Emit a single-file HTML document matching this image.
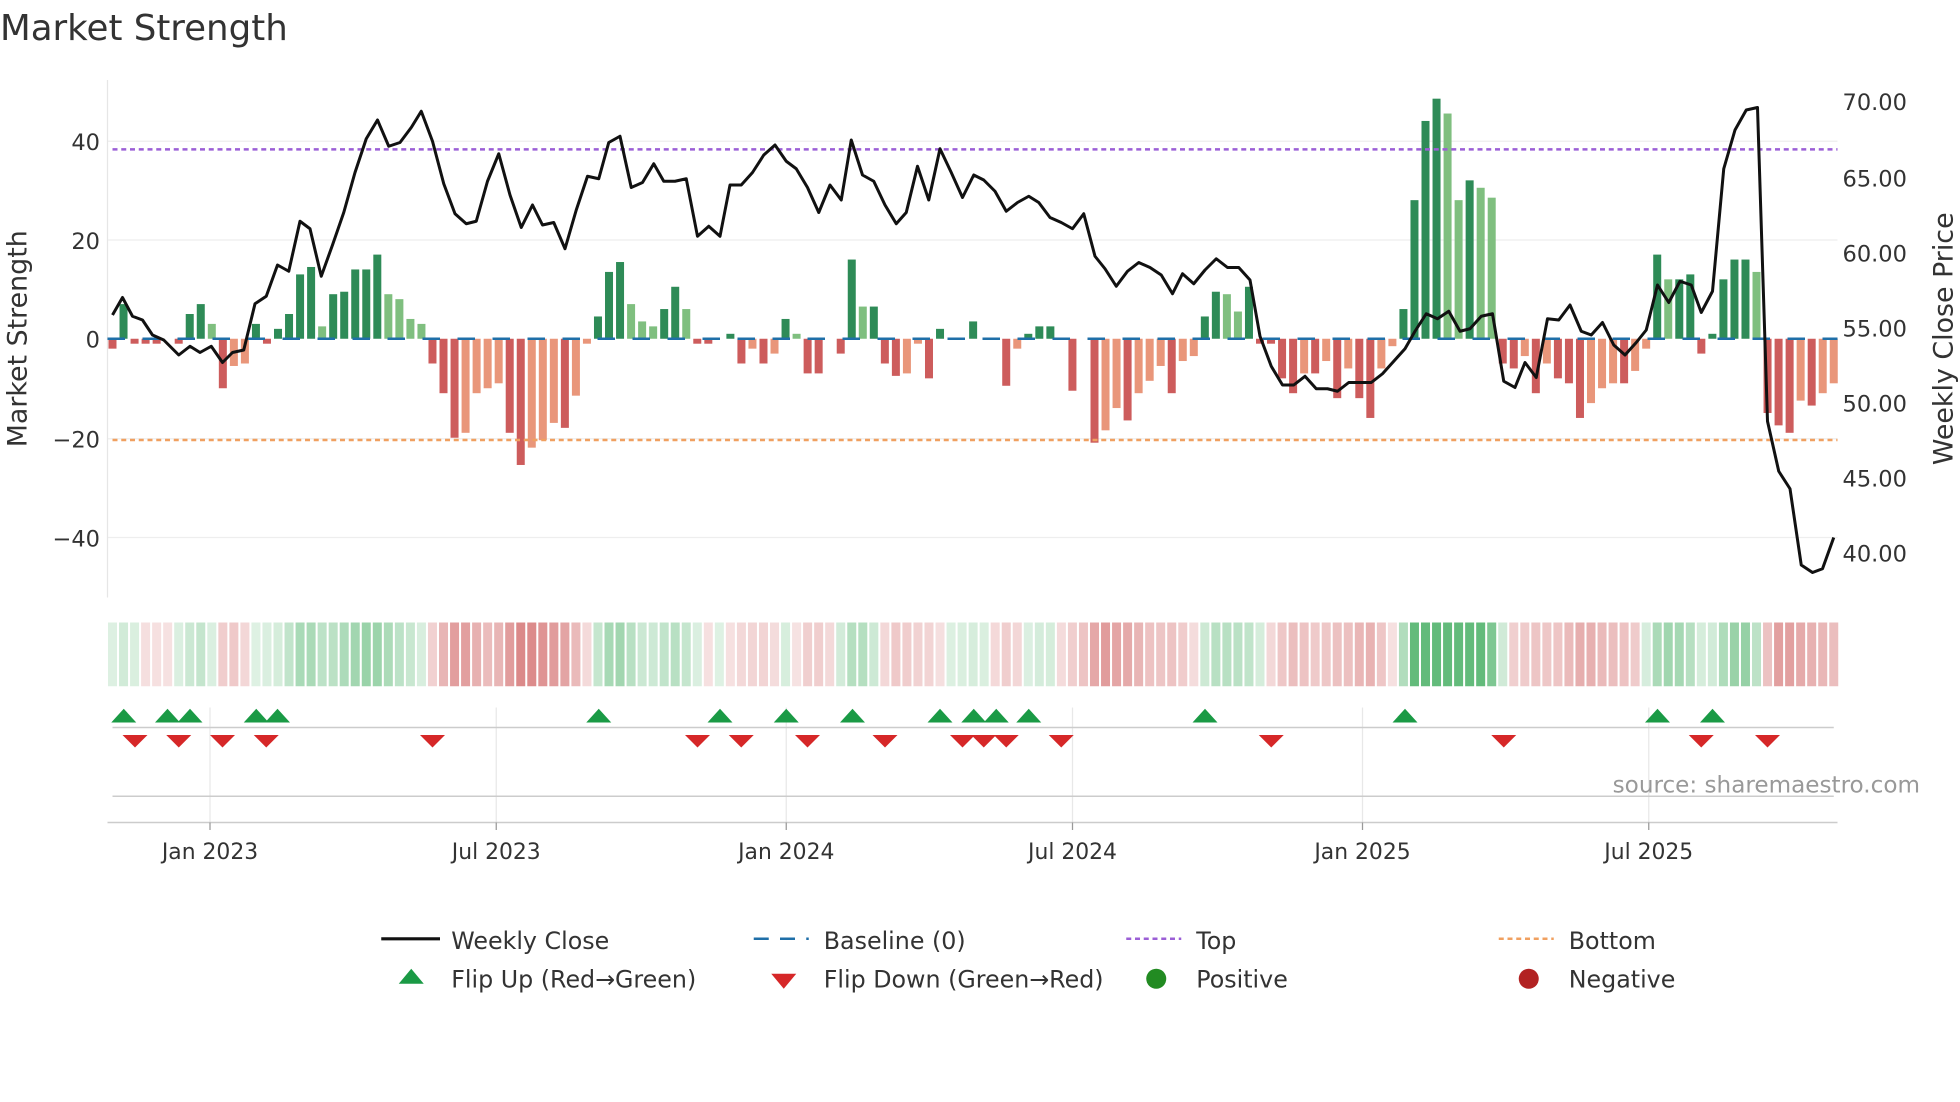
<!DOCTYPE html>
<html><head><meta charset="utf-8"><style>
html,body{margin:0;padding:0;background:#fff;width:1960px;height:1102px;overflow:hidden}
svg{display:block;font-family:"DejaVu Sans","Liberation Sans",sans-serif}
</style></head><body>
<svg id="s" width="1960" height="1102" viewBox="0 0 1568 881.6" xmlns="http://www.w3.org/2000/svg">
<text x="0" y="32" font-size="28.5" fill="#333">Market Strength</text>
<g stroke="#eee" stroke-width="1">
<line x1="86" y1="113" x2="1470" y2="113"/><line x1="86" y1="192" x2="1470" y2="192"/>
<line x1="86" y1="351" x2="1470" y2="351"/><line x1="86" y1="430" x2="1470" y2="430"/>
</g>
<line x1="86" y1="64" x2="86" y2="478" stroke="#e6e6e6"/>
<g id="bars"></g>
<line x1="86" y1="271" x2="1470" y2="271" stroke="#1f6fa8" stroke-width="2" stroke-dasharray="14,14"/>
<line x1="90" y1="119.5" x2="1470" y2="119.5" stroke="#9b5fd6" stroke-width="2" stroke-dasharray="4,3"/>
<line x1="90" y1="352" x2="1470" y2="352" stroke="#f0a060" stroke-width="2" stroke-dasharray="4,3"/>
<polyline id="price" fill="none" stroke="#111" stroke-width="2.4" stroke-linejoin="round"/>
<g font-size="18" fill="#333">
<text x="80" y="120" text-anchor="end">40</text><text x="80" y="199" text-anchor="end">20</text>
<text x="80" y="278" text-anchor="end">0</text><text x="80" y="358" text-anchor="end">−20</text>
<text x="80" y="437" text-anchor="end">−40</text>
<text x="1474" y="88">70.00</text><text x="1474" y="149">65.00</text><text x="1474" y="209">60.00</text>
<text x="1474" y="269">55.00</text><text x="1474" y="329">50.00</text><text x="1474" y="389">45.00</text>
<text x="1474" y="449">40.00</text>
<text transform="translate(21,271) rotate(-90)" text-anchor="middle" font-size="21.5">Market Strength</text>
<text transform="translate(1562,271) rotate(-90)" text-anchor="middle" font-size="21.5">Weekly Close Price</text>
</g>
<g id="heat"></g>
<g stroke="#e8e8e8"><line x1="168" y1="566" x2="168" y2="658"/><line x1="397" y1="566" x2="397" y2="658"/><line x1="629" y1="566" x2="629" y2="658"/><line x1="858" y1="566" x2="858" y2="658"/><line x1="1090" y1="566" x2="1090" y2="658"/><line x1="1319" y1="566" x2="1319" y2="658"/></g>
<line x1="90" y1="582" x2="1467" y2="582" stroke="#ccc" stroke-width="1.2"/>
<line x1="90" y1="637" x2="1467" y2="637" stroke="#ccc" stroke-width="1.2"/>
<line x1="86" y1="658" x2="1470" y2="658" stroke="#ccc" stroke-width="1.2"/>
<g id="flips"></g>
<text x="1536" y="634" text-anchor="end" font-size="18.5" fill="#999">source: sharemaestro.com</text>
<g stroke="#999"><line x1="168" y1="658" x2="168" y2="664"/><line x1="397" y1="658" x2="397" y2="664"/><line x1="629" y1="658" x2="629" y2="664"/><line x1="858" y1="658" x2="858" y2="664"/><line x1="1090" y1="658" x2="1090" y2="664"/><line x1="1319" y1="658" x2="1319" y2="664"/></g>
<g font-size="17.5" fill="#333" text-anchor="middle">
<text x="168" y="687">Jan 2023</text><text x="397" y="687">Jul 2023</text><text x="629" y="687">Jan 2024</text>
<text x="858" y="687">Jul 2024</text><text x="1090" y="687">Jan 2025</text><text x="1319" y="687">Jul 2025</text>
</g>
<g font-size="19" fill="#333">
<line x1="305" y1="751" x2="352" y2="751" stroke="#111" stroke-width="2.5"/><text x="361" y="759">Weekly Close</text>
<line x1="603" y1="751" x2="647" y2="751" stroke="#1f6fa8" stroke-width="2" stroke-dasharray="12,9"/><text x="659" y="759">Baseline (0)</text>
<line x1="901" y1="751" x2="945" y2="751" stroke="#9b5fd6" stroke-width="2" stroke-dasharray="4,3"/><text x="957" y="759">Top</text>
<line x1="1199" y1="751" x2="1243" y2="751" stroke="#f0a060" stroke-width="2" stroke-dasharray="4,3"/><text x="1255" y="759">Bottom</text>
<polygon points="319,787 339,787 329,775" fill="#1a9a45"/><text x="361" y="790">Flip Up (Red→Green)</text>
<polygon points="617,779 637,779 627,791" fill="#d62728"/><text x="659" y="790">Flip Down (Green→Red)</text>
<circle cx="925" cy="783" r="8" fill="#228b22"/><text x="957" y="790">Positive</text>
<circle cx="1223" cy="783" r="8" fill="#b22222"/><text x="1255" y="790">Negative</text>
</g>
</svg>
<script>
var V=[-2,7,-1,-1,-1,0,-1,5,7,3,-10,-5.5,-5,3,-1,2,5,13,14.5,2.5,9,9.5,14,14,17,9,8,4,3,-5,-11,-20,-19,-11,-10,-9,-19,-25.5,-22,-20.5,-17,-18,-11.5,-1,4.5,13.5,15.5,7,3.5,2.5,6,10.5,6,-1,-1,0,1,-5,-2,-5,-3,4,1,-7,-7,0,-3,16,6.5,6.5,-5,-7.5,-7,-1,-8,2,0,0,3.5,0,0,-9.5,-2,1,2.5,2.5,0,-10.5,0,-21,-18.5,-14,-16.5,-11,-8.5,-5.5,-11,-4.5,-3.5,4.5,9.5,9,5.5,10.5,-1,-1,-8,-11,-7,-7,-4.5,-12,-6,-12,-16,-6,-1.5,6,28,44,48.5,45.5,28,32,30.5,28.5,-5,-6,-3.5,-11,-5,-8,-9,-16,-13,-10,-9,-9,-6.5,-2,17,12,12,13,-3,1,12,16,16,13.5,-15,-17.5,-19,-12.5,-13.5,-11,-9];
var P=[[90,252],[98,238],[106,253],[114,256],[122,268],[131,272],[143,284],[152,277],[160,282],[169,277],[178,290],[186,282],[195,280],[204,243],[213,237],[222,212],[231,217],[240,177],[248,183],[257,221],[266,196],[275,170],[284,138],[293,111],[302,96],[311,117],[320,114],[329,102],[337,89],[346,113],[355,147],[364,171],[373,179],[381,177],[390,145],[399,123],[408,156],[417,182],[426,164],[434,180],[443,178],[452,199],[461,168],[470,141],[479,143],[487,114],[496,109],[505,150],[514,146],[523,131],[531,145],[540,145],[549,143],[558,189],[567,181],[576,189],[584,148],[593,148],[602,138],[611,124],[620,116],[629,129],[637,135],[646,150],[655,170],[664,148],[673,160],[681,112],[690,140],[699,145],[708,164],[717,179],[725,170],[734,133],[743,160],[752,119],[761,138],[770,158],[779,140],[787,144],[796,153],[805,169],[814,162],[823,157],[831,162],[840,174],[849,178],[858,183],[867,171],[876,205],[884,215],[893,229],[902,217],[911,210],[920,214],[929,220],[938,235],[946,219],[955,227],[964,216],[973,207],[982,214],[991,214],[1000,224],[1008,269],[1017,293],[1026,308],[1035,308],[1044,301],[1053,311],[1062,311],[1070,313],[1079,306],[1088,306],[1097,306],[1106,299],[1115,289],[1124,279],[1132,265],[1141,251],[1150,255],[1159,249],[1168,265],[1176,263],[1185,253],[1194,251],[1203,305],[1212,310],[1220,290],[1229,302],[1238,255],[1247,256],[1256,244],[1265,265],[1273,268],[1282,258],[1291,276],[1300,284],[1309,274],[1317,264],[1326,228],[1335,242],[1344,225],[1353,228],[1361,250],[1370,233],[1379,135],[1388,104],[1397,88],[1406,86],[1414,337],[1423,377],[1432,391],[1441,452],[1450,458],[1458,455],[1467,430]];
var n=V.length,x0=90,dx=(1467-90)/(n-1),b='',h='';
for(var i=0;i<n;i++){var v=V[i],x=x0+i*dx,pv=i?V[i-1]:0,strong=Math.abs(v)>=Math.abs(pv)||Math.sign(v)!=Math.sign(pv);
var c=v>=0?(strong?'#2e8b57':'#7fbf7f'):(strong?'#cd5c5c':'#e9967a');
var y0=271,y1=271-3.96*v;if(Math.abs(v)>0.2)b+='<rect x="'+(x-3.2)+'" y="'+Math.min(y0,y1)+'" width="6.4" height="'+Math.abs(y1-y0)+'" fill="'+c+'"/>';
var s=(V[Math.max(0,i-1)]+2*v+V[Math.min(n-1,i+1)])/4,a=Math.min(0.8,0.17+Math.abs(s)/42);
var hc=s>=0?'rgba(60,170,90,'+a+')':'rgba(205,90,90,'+a+')';
h+='<rect x="'+(x-3.6)+'" y="498" width="7.2" height="51" fill="'+hc+'"/>';}
document.getElementById('bars').innerHTML=b;document.getElementById('heat').innerHTML=h;
document.getElementById('price').setAttribute('points',P.map(function(p){return p.join(',')}).join(' '));
var U=[99,134,152,205,222,479,576,629,682,752,779,797,823,964,1124,1326,1370],D=[108,143,178,213,346,558,593,646,708,770,787,805,849,1017,1203,1361,1414],f='';
U.forEach(function(x){f+='<polygon points="'+(x-10)+',578 '+(x+10)+',578 '+x+',567" fill="#1a9a45"/>'});
D.forEach(function(x){f+='<polygon points="'+(x-10)+',588 '+(x+10)+',588 '+x+',598" fill="#d62728"/>'});
document.getElementById('flips').innerHTML=f;
</script>
</body></html>
